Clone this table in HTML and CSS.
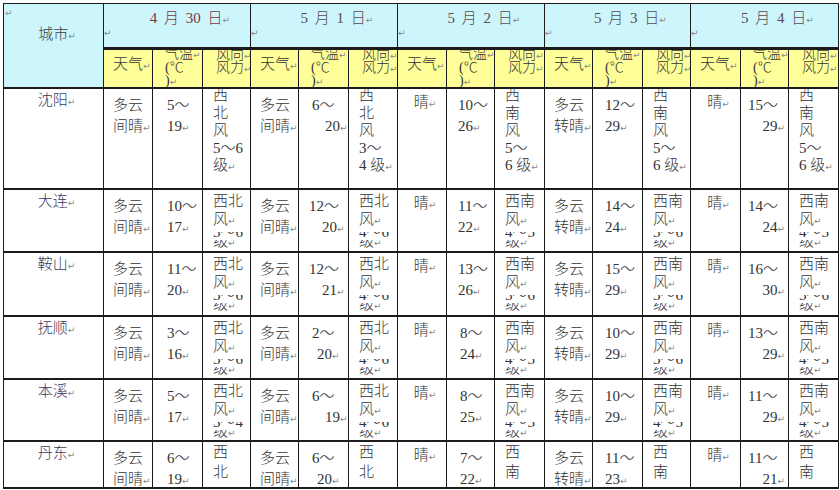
FILE: index.html
```html
<!DOCTYPE html>
<html lang="zh">
<head>
<meta charset="utf-8">
<title>天气预报</title>
<link rel="stylesheet" href="styles.css">
</head>
<body>
<div class="sheet">
  <div class="cityh">
    <div class="mline"><span class="m">↵</span></div>
    <div class="cityt">城市<span class="m">↵</span></div>
  </div>
  <div class="dh"><div class="dt first">4 月 30 日<span class="m">↵</span></div><div class="mline"><span class="m">↵</span></div></div>
  <div class="dh"><div class="dt">5 月 1 日<span class="m">↵</span></div><div class="mline"><span class="m">↵</span></div></div>
  <div class="dh"><div class="dt">5 月 2 日<span class="m">↵</span></div><div class="mline"><span class="m">↵</span></div></div>
  <div class="dh"><div class="dt">5 月 3 日<span class="m">↵</span></div><div class="mline"><span class="m">↵</span></div></div>
  <div class="dh"><div class="dt">5 月 4 日<span class="m">↵</span></div><div class="mline"><span class="m">↵</span></div></div>

  <div class="yh sky">天气<span class="m">↵</span></div>
  <div class="yh tmp"><div class="t1">气温<span class="m">↵</span></div><div>(℃</div><div>)<span class="m">↵</span></div></div>
  <div class="yh wnd"><div class="t1">风向<span class="m">↵</span></div><div>风力<span class="m">↵</span></div></div>
  <div class="yh sky">天气<span class="m">↵</span></div>
  <div class="yh tmp"><div class="t1">气温<span class="m">↵</span></div><div>(℃</div><div>)<span class="m">↵</span></div></div>
  <div class="yh wnd"><div class="t1">风向<span class="m">↵</span></div><div>风力<span class="m">↵</span></div></div>
  <div class="yh sky">天气<span class="m">↵</span></div>
  <div class="yh tmp"><div class="t1">气温<span class="m">↵</span></div><div>(℃</div><div>)<span class="m">↵</span></div></div>
  <div class="yh wnd"><div class="t1">风向<span class="m">↵</span></div><div>风力<span class="m">↵</span></div></div>
  <div class="yh sky">天气<span class="m">↵</span></div>
  <div class="yh tmp"><div class="t1">气温<span class="m">↵</span></div><div>(℃</div><div>)<span class="m">↵</span></div></div>
  <div class="yh wnd"><div class="t1">风向<span class="m">↵</span></div><div>风力<span class="m">↵</span></div></div>
  <div class="yh sky">天气<span class="m">↵</span></div>
  <div class="yh tmp"><div class="t1">气温<span class="m">↵</span></div><div>(℃</div><div>)<span class="m">↵</span></div></div>
  <div class="yh wnd"><div class="t1">风向<span class="m">↵</span></div><div>风力<span class="m">↵</span></div></div>

  <!-- 沈阳 -->
  <div class="c city">沈阳<span class="m">↵</span></div>
  <div class="c sk"><div>多云</div><div>间晴<span class="m">↵</span></div></div>
  <div class="c tp p14"><div>5～</div><div>19<span class="m">↵</span></div></div>
  <div class="c w5"><div>西</div><div>北</div><div>风</div><div>5～6</div><div>级<span class="m">↵</span></div></div>
  <div class="c sk"><div>多云</div><div>间晴<span class="m">↵</span></div></div>
  <div class="c tp p13"><div>6～</div><div class="i2">20<span class="m">↵</span></div></div>
  <div class="c w5"><div>西</div><div>北</div><div>风</div><div>3～</div><div>4 级<span class="m">↵</span></div></div>
  <div class="c sun">晴<span class="m">↵</span></div>
  <div class="c tp p11"><div>10～</div><div>26<span class="m">↵</span></div></div>
  <div class="c w5"><div>西</div><div>南</div><div>风</div><div>5～</div><div>6 级<span class="m">↵</span></div></div>
  <div class="c sk"><div>多云</div><div>转晴<span class="m">↵</span></div></div>
  <div class="c tp p12"><div>12～</div><div>29<span class="m">↵</span></div></div>
  <div class="c w5"><div>西</div><div>南</div><div>风</div><div>5～</div><div>6 级<span class="m">↵</span></div></div>
  <div class="c sun">晴<span class="m">↵</span></div>
  <div class="c tp p7"><div>15～</div><div class="r">29<span class="m">↵</span></div></div>
  <div class="c w5"><div>西</div><div>南</div><div>风</div><div>5～</div><div>6 级<span class="m">↵</span></div></div>

  <!-- 大连 -->
  <div class="c city">大连<span class="m">↵</span></div>
  <div class="c sk"><div>多云</div><div>间晴<span class="m">↵</span></div></div>
  <div class="c tp p14"><div>10～</div><div>17<span class="m">↵</span></div></div>
  <div class="c w"><div class="l1">西北</div><div class="l2">风<span class="m">↵</span></div><div class="cl d"><span>5～6</span></div><div class="cl k"><span>级<span class="m">↵</span></span></div></div>
  <div class="c sk"><div>多云</div><div>间晴<span class="m">↵</span></div></div>
  <div class="c tp p10"><div>12～</div><div class="i2">20<span class="m">↵</span></div></div>
  <div class="c w"><div class="l1">西北</div><div class="l2">风<span class="m">↵</span></div><div class="cl d"><span>4～6</span></div><div class="cl k"><span>级<span class="m">↵</span></span></div></div>
  <div class="c sun">晴<span class="m">↵</span></div>
  <div class="c tp p11"><div>11～</div><div>22<span class="m">↵</span></div></div>
  <div class="c w"><div class="l1">西南</div><div class="l2">风<span class="m">↵</span></div><div class="cl d"><span>4～5</span></div><div class="cl k"><span>级<span class="m">↵</span></span></div></div>
  <div class="c sk"><div>多云</div><div>转晴<span class="m">↵</span></div></div>
  <div class="c tp p12"><div>14～</div><div>24<span class="m">↵</span></div></div>
  <div class="c w"><div class="l1">西南</div><div class="l2">风<span class="m">↵</span></div><div class="cl d"><span>5～6</span></div><div class="cl k"><span>级<span class="m">↵</span></span></div></div>
  <div class="c sun">晴<span class="m">↵</span></div>
  <div class="c tp p7"><div>14～</div><div class="r">24<span class="m">↵</span></div></div>
  <div class="c w"><div class="l1">西南</div><div class="l2">风<span class="m">↵</span></div><div class="cl d"><span>4～5</span></div><div class="cl k"><span>级<span class="m">↵</span></span></div></div>

  <!-- 鞍山 -->
  <div class="c city">鞍山<span class="m">↵</span></div>
  <div class="c sk"><div>多云</div><div>间晴<span class="m">↵</span></div></div>
  <div class="c tp p14"><div>11～</div><div>20<span class="m">↵</span></div></div>
  <div class="c w"><div class="l1">西北</div><div class="l2">风<span class="m">↵</span></div><div class="cl d"><span>5～6</span></div><div class="cl k"><span>级<span class="m">↵</span></span></div></div>
  <div class="c sk"><div>多云</div><div>间晴<span class="m">↵</span></div></div>
  <div class="c tp p10"><div>12～</div><div class="i2">21<span class="m">↵</span></div></div>
  <div class="c w"><div class="l1">西北</div><div class="l2">风<span class="m">↵</span></div><div class="cl d"><span>4～6</span></div><div class="cl k"><span>级<span class="m">↵</span></span></div></div>
  <div class="c sun">晴<span class="m">↵</span></div>
  <div class="c tp p11"><div>13～</div><div>26<span class="m">↵</span></div></div>
  <div class="c w"><div class="l1">西南</div><div class="l2">风<span class="m">↵</span></div><div class="cl d"><span>5～6</span></div><div class="cl k"><span>级<span class="m">↵</span></span></div></div>
  <div class="c sk"><div>多云</div><div>转晴<span class="m">↵</span></div></div>
  <div class="c tp p12"><div>15～</div><div>29<span class="m">↵</span></div></div>
  <div class="c w"><div class="l1">西南</div><div class="l2">风<span class="m">↵</span></div><div class="cl d"><span>5～6</span></div><div class="cl k"><span>级<span class="m">↵</span></span></div></div>
  <div class="c sun">晴<span class="m">↵</span></div>
  <div class="c tp p7"><div>16～</div><div class="r">30<span class="m">↵</span></div></div>
  <div class="c w"><div class="l1">西南</div><div class="l2">风<span class="m">↵</span></div><div class="cl d"><span>5～6</span></div><div class="cl k"><span>级<span class="m">↵</span></span></div></div>

  <!-- 抚顺 -->
  <div class="c city">抚顺<span class="m">↵</span></div>
  <div class="c sk"><div>多云</div><div>间晴<span class="m">↵</span></div></div>
  <div class="c tp p14"><div>3～</div><div>16<span class="m">↵</span></div></div>
  <div class="c w"><div class="l1">西北</div><div class="l2">风<span class="m">↵</span></div><div class="cl d"><span>5～6</span></div><div class="cl k"><span>级<span class="m">↵</span></span></div></div>
  <div class="c sk"><div>多云</div><div>间晴<span class="m">↵</span></div></div>
  <div class="c tp p13"><div>2～</div><div class="i1">20<span class="m">↵</span></div></div>
  <div class="c w"><div class="l1">西北</div><div class="l2">风<span class="m">↵</span></div><div class="cl d"><span>4～6</span></div><div class="cl k"><span>级<span class="m">↵</span></span></div></div>
  <div class="c sun">晴<span class="m">↵</span></div>
  <div class="c tp p13"><div>8～</div><div>24<span class="m">↵</span></div></div>
  <div class="c w"><div class="l1">西南</div><div class="l2">风<span class="m">↵</span></div><div class="cl d"><span>4～5</span></div><div class="cl k"><span>级<span class="m">↵</span></span></div></div>
  <div class="c sk"><div>多云</div><div>转晴<span class="m">↵</span></div></div>
  <div class="c tp p12"><div>10～</div><div>29<span class="m">↵</span></div></div>
  <div class="c w"><div class="l1">西南</div><div class="l2">风<span class="m">↵</span></div><div class="cl d"><span>5～6</span></div><div class="cl k"><span>级<span class="m">↵</span></span></div></div>
  <div class="c sun">晴<span class="m">↵</span></div>
  <div class="c tp p7"><div>13～</div><div class="r">29<span class="m">↵</span></div></div>
  <div class="c w"><div class="l1">西南</div><div class="l2">风<span class="m">↵</span></div><div class="cl d"><span>4～5</span></div><div class="cl k"><span>级<span class="m">↵</span></span></div></div>

  <!-- 本溪 -->
  <div class="c city">本溪<span class="m">↵</span></div>
  <div class="c sk"><div>多云</div><div>间晴<span class="m">↵</span></div></div>
  <div class="c tp p14"><div>5～</div><div>17<span class="m">↵</span></div></div>
  <div class="c w"><div class="l1">西北</div><div class="l2">风<span class="m">↵</span></div><div class="cl d"><span>3～4</span></div><div class="cl k"><span>级<span class="m">↵</span></span></div></div>
  <div class="c sk"><div>多云</div><div>间晴<span class="m">↵</span></div></div>
  <div class="c tp p13"><div>6～</div><div class="i2">19<span class="m">↵</span></div></div>
  <div class="c w"><div class="l1">西北</div><div class="l2">风<span class="m">↵</span></div><div class="cl d"><span>4～6</span></div><div class="cl k"><span>级<span class="m">↵</span></span></div></div>
  <div class="c sun">晴<span class="m">↵</span></div>
  <div class="c tp p13"><div>8～</div><div>25<span class="m">↵</span></div></div>
  <div class="c w"><div class="l1">西南</div><div class="l2">风<span class="m">↵</span></div><div class="cl d"><span>4～5</span></div><div class="cl k"><span>级<span class="m">↵</span></span></div></div>
  <div class="c sk"><div>多云</div><div>转晴<span class="m">↵</span></div></div>
  <div class="c tp p12"><div>10～</div><div>29<span class="m">↵</span></div></div>
  <div class="c w"><div class="l1">西南</div><div class="l2">风<span class="m">↵</span></div><div class="cl d"><span>4～5</span></div><div class="cl k"><span>级<span class="m">↵</span></span></div></div>
  <div class="c sun">晴<span class="m">↵</span></div>
  <div class="c tp p7"><div>11～</div><div class="r">29<span class="m">↵</span></div></div>
  <div class="c w"><div class="l1">西南</div><div class="l2">风<span class="m">↵</span></div><div class="cl d"><span>4～5</span></div><div class="cl k"><span>级<span class="m">↵</span></span></div></div>

  <!-- 丹东 -->
  <div class="c city">丹东<span class="m">↵</span></div>
  <div class="c sk"><div>多云</div><div>间晴<span class="m">↵</span></div></div>
  <div class="c tp p14"><div>6～</div><div>19<span class="m">↵</span></div></div>
  <div class="c w2"><div>西</div><div>北</div></div>
  <div class="c sk"><div>多云</div><div>间晴<span class="m">↵</span></div></div>
  <div class="c tp p13"><div>6～</div><div class="i1">20<span class="m">↵</span></div></div>
  <div class="c w2"><div>西</div><div>北</div></div>
  <div class="c sun">晴<span class="m">↵</span></div>
  <div class="c tp p13"><div>7～</div><div>22<span class="m">↵</span></div></div>
  <div class="c w2"><div>西</div><div>南</div></div>
  <div class="c sk"><div>多云</div><div>转晴<span class="m">↵</span></div></div>
  <div class="c tp p12"><div>11～</div><div>23<span class="m">↵</span></div></div>
  <div class="c w2"><div>西</div><div>南</div></div>
  <div class="c sun">晴<span class="m">↵</span></div>
  <div class="c tp p7"><div>11～</div><div class="r">21<span class="m">↵</span></div></div>
  <div class="c w2"><div>西</div><div>南</div></div>
</div>
</body>
</html>
```

FILE: styles.css
```css
html, body {
  margin: 0;
  padding: 0;
  background: #ffffff;
}

body {
  font-family: "Liberation Serif", "Noto Sans CJK SC", serif;
  font-size: 15px;
  font-weight: 300;
  color: #333333;
}

.sheet {
  margin: 3px 0 0 3px;
  width: 836px;
  box-sizing: border-box;
  padding: 1px 1px 2px 1px;
  background: #1c1c1c;
  display: grid;
  grid-template-columns: 99px 48px 49px 47px 47px 49px 48px 48px 47px 49px 47px 49px 47px 49px 47px 49px;
  grid-template-rows: 43px 38px 99px 61px 62px 61px 60px 45px;
  column-gap: 1px;
  row-gap: 2px;
  overflow: hidden;
}

.sheet > div {
  background: #ffffff;
  overflow: hidden;
  white-space: nowrap;
}

/* paragraph mark */
.m {
  font-family: "DejaVu Sans", sans-serif;
  font-size: 9px;
  line-height: 0;
  color: #8a8a8a;
  font-weight: normal;
}

.mline {
  line-height: 12px;
  height: 12px;
}

/* header */
.sheet > .cityh {
  grid-row: span 2;
  background: #ccf6fb;
  padding: 1px 0 0 1px;
}

.cityt {
  margin-top: 7px;
  line-height: 20px;
  text-align: center;
  padding-left: 6px;
  color: #3c3c4a;
}

.sheet > .dh {
  grid-column: span 3;
  background: #ccf6fb;
  padding-top: 4px;
}

.dh .mline {
  margin-top: -3px;
}

.dt {
  line-height: 20px;
  text-align: center;
  padding-left: 26px;
  word-spacing: 3px;
  color: #5a4a52;
}

.dt.first {
  color: #7a3444;
}

.sheet > .yh {
  background: #ffff99;
  border-top: 1px solid #1c1c1c;
}

.yh.sky {
  padding: 4px 0 0 9px;
  line-height: 20px;
}

.yh.tmp {
  padding-left: 12px;
  font-size: 14px;
  line-height: 13.5px;
}

.yh.tmp > div {
  height: 13.5px;
}

.yh.tmp .t1 {
  margin-top: -3px;
}

.yh.wnd {
  padding-left: 13px;
  font-size: 14px;
  line-height: 13px;
}

.yh.wnd > div {
  height: 13px;
}

.yh.wnd .t1 {
  margin-top: -2px;
}

/* body cells */
.city {
  padding-top: 1px;
  padding-left: 6px;
  line-height: 20px;
  text-align: center;
  color: #38385e;
}

.sk {
  padding: 6px 0 0 9px;
  line-height: 21px;
}

.tp {
  padding-top: 6px;
  line-height: 21px;
}

.p7 { padding-left: 7px; padding-right: 3px; }
.p10 { padding-left: 10px; }
.p11 { padding-left: 11px; }
.p12 { padding-left: 12px; }
.p13 { padding-left: 13px; }
.p14 { padding-left: 14px; }

.i1 { padding-left: 5px; }
.i2 { padding-left: 13px; }
.r { text-align: right; }

.sun {
  padding: 3px 0 0 6px;
  line-height: 20px;
  text-align: center;
}

.w5 {
  padding-left: 10px;
  line-height: 17.5px;
}

.w5 > div:first-child {
  margin-top: -2px;
}

.w {
  padding: 2px 0 0 10px;
}

.w .l1 {
  line-height: 18px;
}

.w .l2 {
  line-height: 18px;
  margin-bottom: 4px;
}

.cl {
  overflow: hidden;
}

.cl > span {
  display: block;
  line-height: 15px;
}

.cl.d {
  height: 8px;
}

.cl.d > span {
  margin-top: -7px;
}

.cl.k {
  height: 9px;
}

.cl.k > span {
  margin-top: -6px;
}

.w2 {
  padding-left: 10px;
  line-height: 20px;
}
```
